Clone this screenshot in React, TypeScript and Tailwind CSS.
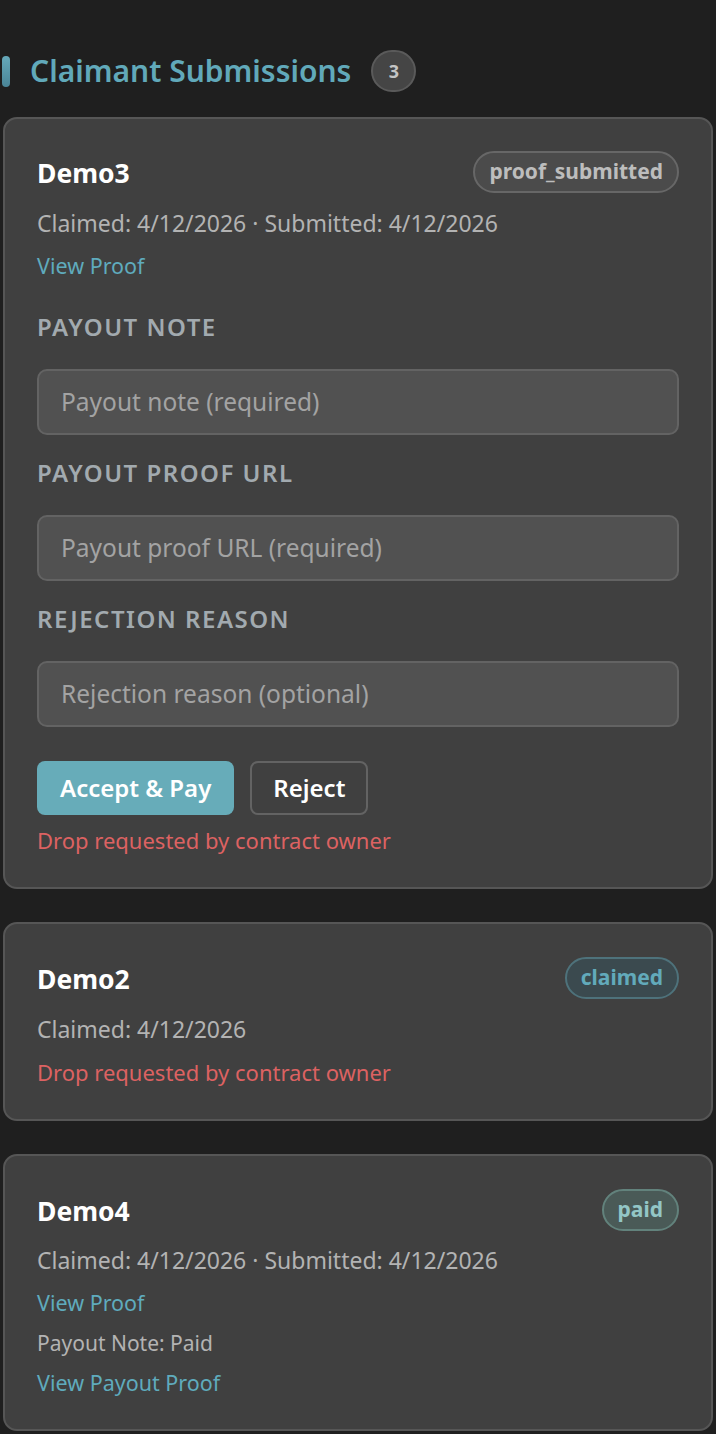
import React from "react";

const font = { fontFamily: '"Noto Sans", "Open Sans", sans-serif' };

function Badge({ label, tone }: { label: string; tone: "gray" | "teal" | "green" }) {
  const tones = {
    gray: "bg-[#4b4b4b] border-[#676767] text-[#bdbdbd]",
    teal: "bg-[#3b4a4f] border-[#4e727b] text-[#62aabb]",
    green: "bg-[#4a5a57] border-[#62827c] text-[#93c6c6]",
  };
  return (
    <span className={`flex h-[42px] items-center rounded-full border-2 px-[14px] text-[21px] font-bold ${tones[tone]}`}>
      {label}
    </span>
  );
}

function Field({ label, placeholder, top }: { label: string; placeholder: string; top: string }) {
  return (
    <>
      <div className={`${top} text-[24px] font-semibold uppercase leading-[30px] tracking-[1.5px] text-[#a2aaaf]`}>{label}</div>
      <div className="mt-[27px] flex h-[66px] items-center rounded-[10px] border-2 border-[#636363] bg-[#515151] px-[22px] text-[24.5px] text-[#a3a3a3]">
        {placeholder}
      </div>
    </>
  );
}

export default function App() {
  return (
    <div style={font} className="min-h-screen bg-[#1f1f1f] px-[3px] pt-[50px] pb-[3px]">
      <div className="flex h-[42px] items-center">
        <span className="ml-[-1px] h-[31px] w-[8px] rounded-full bg-gradient-to-b from-[#66a9ba] to-[#4a8597]" />
        <h2 className="ml-[20px] text-[30px] font-semibold leading-none text-[#61a9ba]">Claimant Submissions</h2>
        <span className="ml-[20px] flex h-[42px] w-[45px] items-center justify-center rounded-full border-2 border-[#5a5a5a] bg-[#454545] text-[18px] font-bold text-[#c4c4c4]">
          3
        </span>
      </div>

      <div className="mt-[25px] flex flex-col gap-[33px]">
        <div className="rounded-[14px] border-2 border-[#565656] bg-[#404040] px-[32px] pt-[31px] pb-[32px]">
          <div className="flex h-[43px] items-center justify-between">
            <span className="pt-[4px] text-[26.5px] font-bold text-white">Demo3</span>
            <Badge label="proof_submitted" tone="gray" />
          </div>
          <div className="mt-[15px] text-[23px] leading-[30px] text-[#b3b3b3]">Claimed: 4/12/2026 · Submitted: 4/12/2026</div>
          <div className="mt-[13px] text-[21.5px] leading-[30px] text-[#5fabbd]">View Proof</div>
          <Field label="Payout Note" placeholder="Payout note (required)" top="mt-[31px]" />
          <Field label="Payout Proof URL" placeholder="Payout proof URL (required)" top="mt-[23px]" />
          <Field label="Rejection Reason" placeholder="Rejection reason (optional)" top="mt-[23px]" />
          <div className="mt-[34px] flex gap-[16px]">
            <button className="h-[54px] rounded-[8px] bg-[#67acb9] px-[23px] text-[24px] font-semibold text-white">Accept &amp; Pay</button>
            <button className="h-[54px] rounded-[8px] border-2 border-[#636363] px-[21px] text-[24px] font-semibold text-white">Reject</button>
          </div>
          <div className="mt-[10px] text-[22px] leading-[30px] text-[#dc6262]">Drop requested by contract owner</div>
        </div>

        <div className="rounded-[14px] border-2 border-[#565656] bg-[#404040] px-[32px] pt-[33px] pb-[32px]">
          <div className="flex h-[42px] items-center justify-between">
            <span className="pt-[4px] text-[26.5px] font-bold text-white">Demo2</span>
            <Badge label="claimed" tone="teal" />
          </div>
          <div className="mt-[15px] text-[23px] leading-[30px] text-[#b3b3b3]">Claimed: 4/12/2026</div>
          <div className="mt-[13px] text-[22px] leading-[30px] text-[#dc6262]">Drop requested by contract owner</div>
        </div>

        <div className="rounded-[14px] border-2 border-[#565656] bg-[#404040] px-[32px] pt-[33px] pb-[31px]">
          <div className="flex h-[42px] items-center justify-between">
            <span className="pt-[4px] text-[26.5px] font-bold text-white">Demo4</span>
            <Badge label="paid" tone="green" />
          </div>
          <div className="mt-[14px] text-[23px] leading-[30px] text-[#b3b3b3]">Claimed: 4/12/2026 · Submitted: 4/12/2026</div>
          <div className="mt-[13px] text-[21.5px] leading-[30px] text-[#5fabbd]">View Proof</div>
          <div className="mt-[10px] text-[21px] leading-[30px] text-[#b3b3b3]">Payout Note: Paid</div>
          <div className="mt-[10px] text-[21.5px] leading-[30px] text-[#5fabbd]">View Payout Proof</div>
        </div>
      </div>
    </div>
  );
}
